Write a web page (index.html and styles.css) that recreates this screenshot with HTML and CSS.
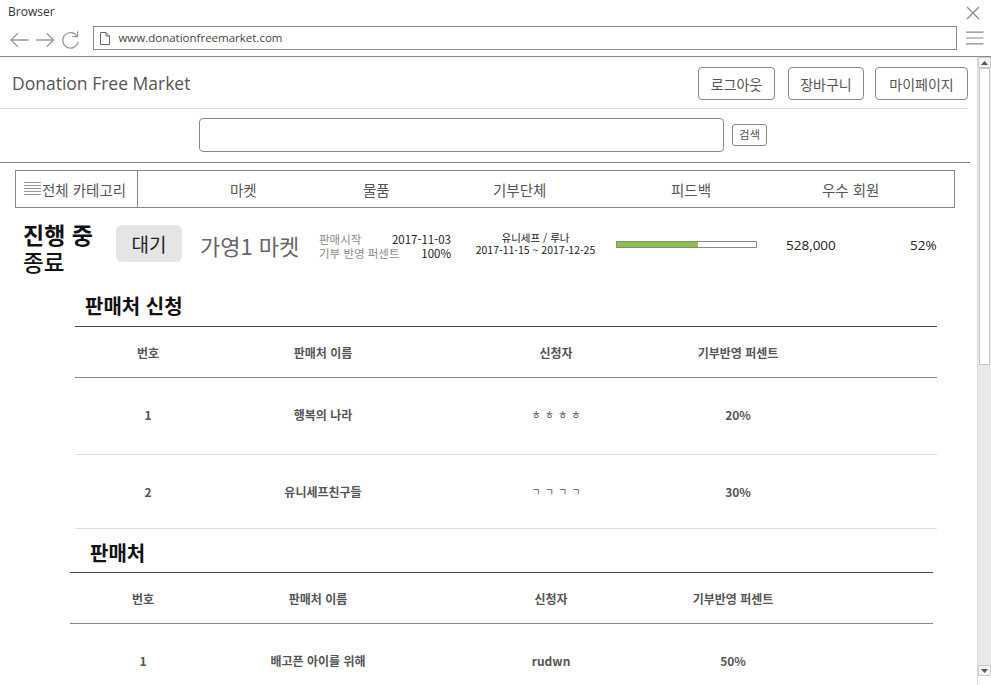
FILE: index.html
```html
<!DOCTYPE html>
<html lang="ko">
<head>
<meta charset="utf-8">
<title>Donation Free Market</title>
<link rel="stylesheet" href="styles.css">
</head>
<body>
<div class="browser">
  <div class="titlebar">
    <span class="title">Browser</span>
    <svg class="close" width="14" height="14" viewBox="0 0 14 14"><path d="M1 1L13 13M13 1L1 13" stroke="#888" stroke-width="1.2" fill="none"/></svg>
  </div>
  <div class="toolbar">
    <svg class="nav-icon" width="20" height="16" viewBox="0 0 20 16"><path d="M1 8H19M8 1L1 8L8 15" stroke="#9a9a9a" stroke-width="1.3" fill="none"/></svg>
    <svg class="nav-icon" width="20" height="16" viewBox="0 0 20 16"><path d="M1 8H19M12 1L19 8L12 15" stroke="#9a9a9a" stroke-width="1.3" fill="none"/></svg>
    <svg class="nav-icon" width="20" height="20" viewBox="0 0 20 20"><path d="M16.5 6A8 8 0 1 0 17.6 12" stroke="#9a9a9a" stroke-width="1.3" fill="none"/><path d="M17 1V6.5H11.5" stroke="#9a9a9a" stroke-width="1.3" fill="none"/></svg>
    <div class="address">
      <svg width="10" height="13" viewBox="0 0 10 13"><path d="M0.5 0.5H6L9.5 4V12.5H0.5Z M6 0.5V4H9.5" stroke="#666" stroke-width="1" fill="none"/></svg>
      <span class="url">www.donationfreemarket.com</span>
    </div>
    <svg class="menu" width="18" height="14" viewBox="0 0 18 14"><path d="M0 1H18M0 7H18M0 13H18" stroke="#888" stroke-width="1.2"/></svg>
  </div>
  <div class="viewport">
    <div class="page">
      <header class="site-header">
        <div class="brand">Donation Free Market</div>
        <div class="header-buttons">
          <button class="hbtn w77">로그아웃</button>
          <button class="hbtn w76">장바구니</button>
          <button class="hbtn w93">마이페이지</button>
        </div>
      </header>
      <div class="search-row">
        <input class="search-input" type="text">
        <button class="search-btn">검색</button>
      </div>
      <nav class="catnav">
        <div class="allcat">
          <svg width="17" height="14" viewBox="0 0 17 14"><path d="M0 1.5H17M0 4.5H17M0 7.5H17M0 10.5H17M0 13.5H17" stroke="#999" stroke-width="1"/></svg>
          <span>전체 카테고리</span>
        </div>
        <div class="navitems">
          <span class="ni">마켓</span>
          <span class="ni">물품</span>
          <span class="ni">기부단체</span>
          <span class="ni">피드백</span>
          <span class="ni">우수 회원</span>
        </div>
      </nav>
      <div class="market-row">
        <div class="status">
          <div class="st-on">진행 중</div>
          <div class="st-off">종료</div>
        </div>
        <div class="wait">대기</div>
        <div class="mname">가영1 마켓</div>
        <div class="info">
          <div class="irow"><span class="lbl">판매시작</span><span class="val">2017-11-03</span></div>
          <div class="irow"><span class="lbl">기부 반영 퍼센트</span><span class="val">100%</span></div>
        </div>
        <div class="org">
          <div>유니세프 / 루나</div>
          <div>2017-11-15 ~ 2017-12-25</div>
        </div>
        <div class="progress"><div class="fill" style="width:81px"></div></div>
        <div class="amount">528,000</div>
        <div class="pct">52%</div>
      </div>

      <section class="tsec s1">
        <h2 class="sec-title">판매처 신청</h2>
        <div class="table">
          <div class="trow thead">
            <span>번호</span><span>판매처 이름</span><span>신청자</span><span>기부반영 퍼센트</span><span></span>
          </div>
          <div class="trow tbody r77">
            <span>1</span><span>행복의 나라</span><span class="jamo">ㅎㅎㅎㅎ</span><span>20%</span><span></span>
          </div>
          <div class="trow tbody r74">
            <span>2</span><span>유니세프친구들</span><span class="jamo">ㄱㄱㄱㄱ</span><span>30%</span><span></span>
          </div>
        </div>
      </section>

      <section class="tsec s2">
        <h2 class="sec-title">판매처</h2>
        <div class="table">
          <div class="trow thead">
            <span>번호</span><span>판매처 이름</span><span>신청자</span><span>기부반영 퍼센트</span><span></span>
          </div>
          <div class="trow tbody r77">
            <span>1</span><span>배고픈 아이를 위해</span><span>rudwn</span><span>50%</span><span></span>
          </div>
        </div>
      </section>
    </div>
    <div class="scrollbar">
      <div class="sb-btn"><svg width="7" height="4" viewBox="0 0 7 4"><path d="M0 4L3.5 0L7 4Z" fill="#555"/></svg></div>
      <div class="sb-thumb"></div>
      <div class="sb-track"></div>
      <div class="sb-btn down"><svg width="7" height="4" viewBox="0 0 7 4"><path d="M0 0L3.5 4L7 0Z" fill="#555"/></svg></div>
      <div class="sb-end"></div>
    </div>
  </div>
</div>
</body>
</html>
```
FILE: styles.css
```css
* { box-sizing: border-box; }
html, body { margin: 0; padding: 0; background: #fff; }
body {
  width: 991px;
  height: 685px;
  overflow: hidden;
  font-family: "Noto Sans CJK KR", "Open Sans", sans-serif;
  color: #333;
}
.browser { width: 991px; height: 685px; display: flex; flex-direction: column; }

.titlebar {
  height: 24px;
  display: flex;
  align-items: center;
  justify-content: space-between;
  padding: 0 11px 0 8px;
}
.title { font-family: "Open Sans", sans-serif; font-size: 12px; color: #333; line-height: 1; margin-top: -1px; }
.close { margin-top: 1px; }

.toolbar {
  height: 33px;
  display: flex;
  align-items: flex-start;
  padding: 2px 7px 0 10px;
  border-bottom: 1px solid #8a8a8a;
}
.nav-icon { margin-top: 6px; margin-right: 6px; }
.nav-icon:nth-child(3) { margin-top: 4px; margin-right: 13px; }
.address {
  flex: none;
  width: 864px;
  height: 24px;
  border: 1px solid #8a8a8a;
  display: flex;
  align-items: center;
  padding-left: 6px;
}
.url { font-family: "Open Sans", sans-serif; font-size: 11.5px; color: #444; margin-left: 8px; line-height: 1; }
.menu { margin-left: 9px; margin-top: 5px; }

.viewport { flex: 1; display: flex; overflow: hidden; }
.page { width: 977px; flex: none; padding-right: 9px; overflow: hidden; }

.site-header {
  height: 52px;
  display: flex;
  align-items: flex-start;
  justify-content: space-between;
  padding-top: 10px;
  border-bottom: 1px solid #dcdcdc;
}
.brand {
  font-family: "Open Sans", sans-serif;
  font-size: 17.5px;
  color: #555;
  margin-left: 12px;
  margin-top: 4px;
  line-height: 24px;
}
.header-buttons { display: flex; }
.hbtn {
  height: 33px;
  border: 1px solid #888;
  border-radius: 4px;
  background: #fff;
  font-family: "Noto Sans CJK KR", sans-serif;
  font-size: 14px;
  color: #555;
  padding: 0;
  line-height: 1;
}
.w77 { width: 77px; margin-right: 13px; }
.w76 { width: 76px; margin-right: 11px; }
.w93 { width: 93px; }

.search-row {
  height: 54px;
  display: flex;
  justify-content: center;
  align-items: flex-start;
  padding-top: 9px;
  border-bottom: 1px solid #888;
  margin-right: -2px;
}
.search-input {
  width: 525px;
  height: 34px;
  border: 1px solid #888;
  border-radius: 4px;
  margin: 0 0 0 -4px;
}
.search-btn {
  width: 35px;
  height: 22px;
  margin-left: 8px;
  margin-top: 6px;
  border: 1px solid #888;
  border-radius: 3px;
  background: #fff;
  font-family: "Noto Sans CJK KR", sans-serif;
  font-size: 11.5px;
  color: #555;
  padding: 0;
  line-height: 1;
}

.catnav {
  margin: 7px 13px 0 15px;
  height: 38px;
  border: 1px solid #888;
  display: flex;
  align-items: stretch;
}
.allcat {
  width: 122px;
  border-right: 1px solid #888;
  display: flex;
  align-items: center;
  padding-left: 8px;
  font-size: 14.5px;
  color: #555;
}
.allcat svg { margin-right: 1px; margin-top: -3px; }
.navitems {
  flex: 1;
  display: grid;
  grid-template-columns: 133px 130px 178px 151px 1fr;
  align-items: center;
  padding-left: 92px;
  font-size: 14.5px;
  color: #555;
}
.ni { white-space: nowrap; }

.market-row {
  height: 76px;
  display: flex;
  align-items: center;
  padding-left: 23px;
}
.status { width: 93px; margin-top: 3px; }
.st-on { font-size: 23px; font-weight: 700; color: #111; line-height: 28px; height: 28px; }
.st-off { font-size: 22.5px; font-weight: 500; color: #111; line-height: 27px; height: 27px; }
.wait {
  width: 66px;
  height: 37px;
  background: #e5e5e5;
  border-radius: 6px;
  display: flex;
  align-items: center;
  justify-content: center;
  font-size: 19px;
  color: #222;
  margin-right: 18px;
  margin-top: -5px;
}
.mname { font-size: 22px; color: #666; width: 119px; margin-top: -2px; }
.info { font-size: 11.5px; width: 132px; margin-right: 20px; margin-top: -1px; }
.irow { display: flex; justify-content: space-between; white-space: nowrap; line-height: 14px; height: 14px; }
.lbl { color: #888; }
.val { color: #222; }
.org { font-size: 10.5px; text-align: center; width: 129px; color: #222; margin-top: -4px; white-space: nowrap; }
.org div { line-height: 12px; height: 12px; }
.progress {
  width: 141px;
  height: 7px;
  border: 1px solid #888;
  margin-top: -4px;
  margin-left: 16px;
}
.fill { height: 100%; background: #8bc34a; }
.amount { font-family: "Open Sans", sans-serif; font-size: 13.5px; color: #222; margin-left: 29px; width: 124px; margin-top: -3px; }
.pct { font-family: "Open Sans", sans-serif; font-size: 13.5px; color: #222; margin-top: -3px; }

.tsec { width: 862px; }
.s1 { margin-left: 75px; margin-top: 4px; }
.s2 { margin-left: 70px; width: 863px; }
.sec-title {
  margin: 0;
  height: 38px;
  font-size: 20px;
  font-weight: 700;
  color: #111;
  line-height: 30px;
  padding-left: 10px;
  padding-top: 3px;
}
.s2 .sec-title { padding-left: 20px; height: 43px; line-height: 46px; padding-top: 1px; }
.table { border-top: 1.5px solid #444; }
.trow {
  display: grid;
  grid-template-columns: 146px 204px 262px 102px 1fr;
  align-items: center;
  text-align: center;
  font-size: 12px;
  font-weight: 700;
  color: #555;
}
.thead { height: 51px; border-bottom: 1px solid #888; }
.tbody { border-bottom: 1px solid #ddd; padding-bottom: 3px; }
.r77 { height: 77px; }
.r74 { height: 74px; padding-bottom: 0; }
.trow span { white-space: nowrap; }
.jamo { font-weight: 400; font-size: 10px; letter-spacing: 4px; padding-left: 4px; }

.scrollbar {
  width: 14px;
  flex: none;
  display: flex;
  flex-direction: column;
  background: #e9e9e9;
  border-left: 1px solid #dcdcdc;
}
.sb-btn {
  height: 11px;
  background: #f4f4f4;
  display: flex;
  align-items: center;
  justify-content: center;
  border: 1px solid #ccc;
}
.sb-thumb {
  height: 297px;
  background: #fff;
  border: 1px solid #c8c8c8;
  margin: 0 1px;
}
.sb-track { flex: 1; }
.sb-end { height: 9px; background: #fff; }
```
